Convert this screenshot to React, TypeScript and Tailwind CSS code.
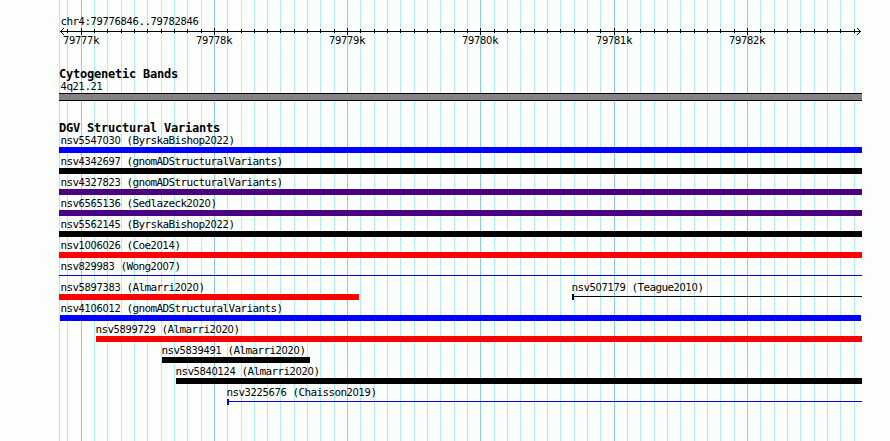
import type { ReactNode } from "react";

const GRID = [
  59, 67, 81, 94, 107, 121, 134, 147, 161, 174, 187, 201, 214, 227, 241, 254, 267, 280, 294, 307, 320, 334, 347,
  360, 374, 387, 400, 414, 427, 440, 454, 467, 480, 494, 507, 520, 534, 547, 560, 574, 587, 600, 614, 627, 640,
  654, 667, 680, 694, 707, 720, 734, 747, 760, 774, 787, 800, 814, 827, 840, 854,
];
const MAJOR: Record<number, string> = {
  81: "79777k",
  214: "79778k",
  347: "79779k",
  480: "79780k",
  614: "79781k",
  747: "79782k",
};

type Feature = { name: string; start: number; end: number; text: number; color: string; thin?: boolean; cap?: boolean };

const ROWS: Feature[][] = [
  [{ name: "nsv5547030 (ByrskaBishop2022)", start: 59, end: 862, text: 60, color: "bg-[#0000ff]" }],
  [{ name: "nsv4342697 (gnomADStructuralVariants)", start: 59, end: 862, text: 60, color: "bg-black" }],
  [{ name: "nsv4327823 (gnomADStructuralVariants)", start: 59, end: 862, text: 60, color: "bg-[#4b0082]" }],
  [{ name: "nsv6565136 (Sedlazeck2020)", start: 59, end: 862, text: 60, color: "bg-[#4b0082]" }],
  [{ name: "nsv5562145 (ByrskaBishop2022)", start: 59, end: 862, text: 60, color: "bg-black" }],
  [{ name: "nsv1006026 (Coe2014)", start: 59, end: 862, text: 60, color: "bg-[#ff0000]" }],
  [{ name: "nsv829983 (Wong2007)", start: 59, end: 862, text: 60, color: "bg-[#0000c8]", thin: true }],
  [
    { name: "nsv5897383 (Almarri2020)", start: 59, end: 359, text: 60, color: "bg-[#ff0000]" },
    { name: "nsv507179 (Teague2010)", start: 572, end: 862, text: 571, color: "bg-black", thin: true, cap: true },
  ],
  [{ name: "nsv4106012 (gnomADStructuralVariants)", start: 60, end: 861, text: 60, color: "bg-[#0000ff]" }],
  [{ name: "nsv5899729 (Almarri2020)", start: 96, end: 862, text: 95, color: "bg-[#ff0000]" }],
  [{ name: "nsv5839491 (Almarri2020)", start: 162, end: 310, text: 161, color: "bg-black" }],
  [{ name: "nsv5840124 (Almarri2020)", start: 176, end: 862, text: 175, color: "bg-black" }],
  [{ name: "nsv3225676 (Chaisson2019)", start: 227, end: 862, text: 226, color: "bg-[#0000e0]", thin: true, cap: true }],
];

/* Six-pixel character cells; digit runs use the condensed face for its plain zero. */
function Label({ children }: { children: string }) {
  return (
    <span className="block h-[13px] whitespace-pre pl-[0.4px] font-['DejaVu_Sans_Mono',monospace] text-[11px] leading-[13px] tracking-[-0.622px]">
      {children.split(/(\d+)/).map((part, i) =>
        i % 2 ? (
          <span key={i} className="font-['DejaVu_Sans_Condensed','DejaVu_Sans',sans-serif] tracking-[-0.298px]">
            {part}
          </span>
        ) : (
          part
        ),
      )}
    </span>
  );
}

function Heading({ children }: { children: ReactNode }) {
  return (
    <h2 className="ml-[59px] h-[13px] whitespace-pre font-['DejaVu_Sans_Mono',monospace] text-[12px] font-bold leading-[13px] tracking-[-0.224px]">
      {children}
    </h2>
  );
}

function GridLines() {
  return (
    <div className="absolute inset-0" aria-hidden="true">
      {GRID.map((x) => (
        <i key={x} className={`absolute inset-y-0 w-px ${MAJOR[x] ? "bg-[#87ceeb]" : "bg-[#afeeee]"}`} style={{ left: x }} />
      ))}
    </div>
  );
}

function Ruler() {
  return (
    <svg className="block" width="890" height="8" viewBox="0 0 890 8" shapeRendering="crispEdges">
      <rect x="60" y="3" width="801" height="1" />
      {GRID.slice(1).map((x) => (
        <rect key={x} x={x} y={MAJOR[x] ? 0 : 1} width="1" height={MAJOR[x] ? 7 : 4} />
      ))}
      <path d="M61 2h1v1h-1zM62 1h1v1h-1zM63 0h1v1h-1zM61 4h1v1h-1zM62 5h1v1h-1zM63 6h1v1h-1z" />
      <path d="M859 2h1v1h-1zM858 1h1v1h-1zM857 0h1v1h-1zM859 4h1v1h-1zM858 5h1v1h-1zM857 6h1v1h-1z" />
    </svg>
  );
}

function Track({ f }: { f: Feature }) {
  return (
    <div className="w-0 shrink-0">
      <div className="whitespace-nowrap" style={{ marginLeft: f.text }}>
        <Label>{f.name}</Label>
      </div>
      <div className="flex h-[6px]" style={{ marginLeft: f.start, width: f.end - f.start }}>
        {f.cap && <span className={`h-[6px] w-[2px] ${f.color}`} />}
        <span className={`flex-1 ${f.color} ${f.thin ? "mt-[2px] h-px" : "h-[6px]"}`} />
      </div>
    </div>
  );
}

export default function App() {
  return (
    <div className="relative h-[441px] w-[890px] overflow-hidden bg-[#fcfefc] text-black">
      <GridLines />
      <main className="relative flex flex-col">
        <div className="ml-[60px] mt-[15px]">
          <Label>chr4:79776846..79782846</Label>
        </div>
        <Ruler />
        <div className="-mt-[2px] flex h-[13px]">
          {Object.entries(MAJOR).map(([x, text], i, all) => (
            <div key={x} className="w-0" style={{ marginLeft: i ? Number(x) - Number(all[i - 1][0]) : Number(x) - 18.5 }}>
              <Label>{text}</Label>
            </div>
          ))}
        </div>
        <div className="mt-[21px]">
          <Heading>Cytogenetic Bands</Heading>
        </div>
        <div className="-mt-px ml-[60px]">
          <Label>4q21.21</Label>
        </div>
        <div className="ml-[59px] h-[8px] w-[803px] border-y border-black bg-[#848284]" />
        <div className="mt-[21px]">
          <Heading>DGV Structural Variants</Heading>
        </div>
        <div className="-mt-px flex flex-col gap-[2px]">
          {ROWS.map((row) => (
            <div key={row[0].name} className="flex h-[19px]">
              {row.map((f) => (
                <Track key={f.name} f={f} />
              ))}
            </div>
          ))}
        </div>
      </main>
    </div>
  );
}
